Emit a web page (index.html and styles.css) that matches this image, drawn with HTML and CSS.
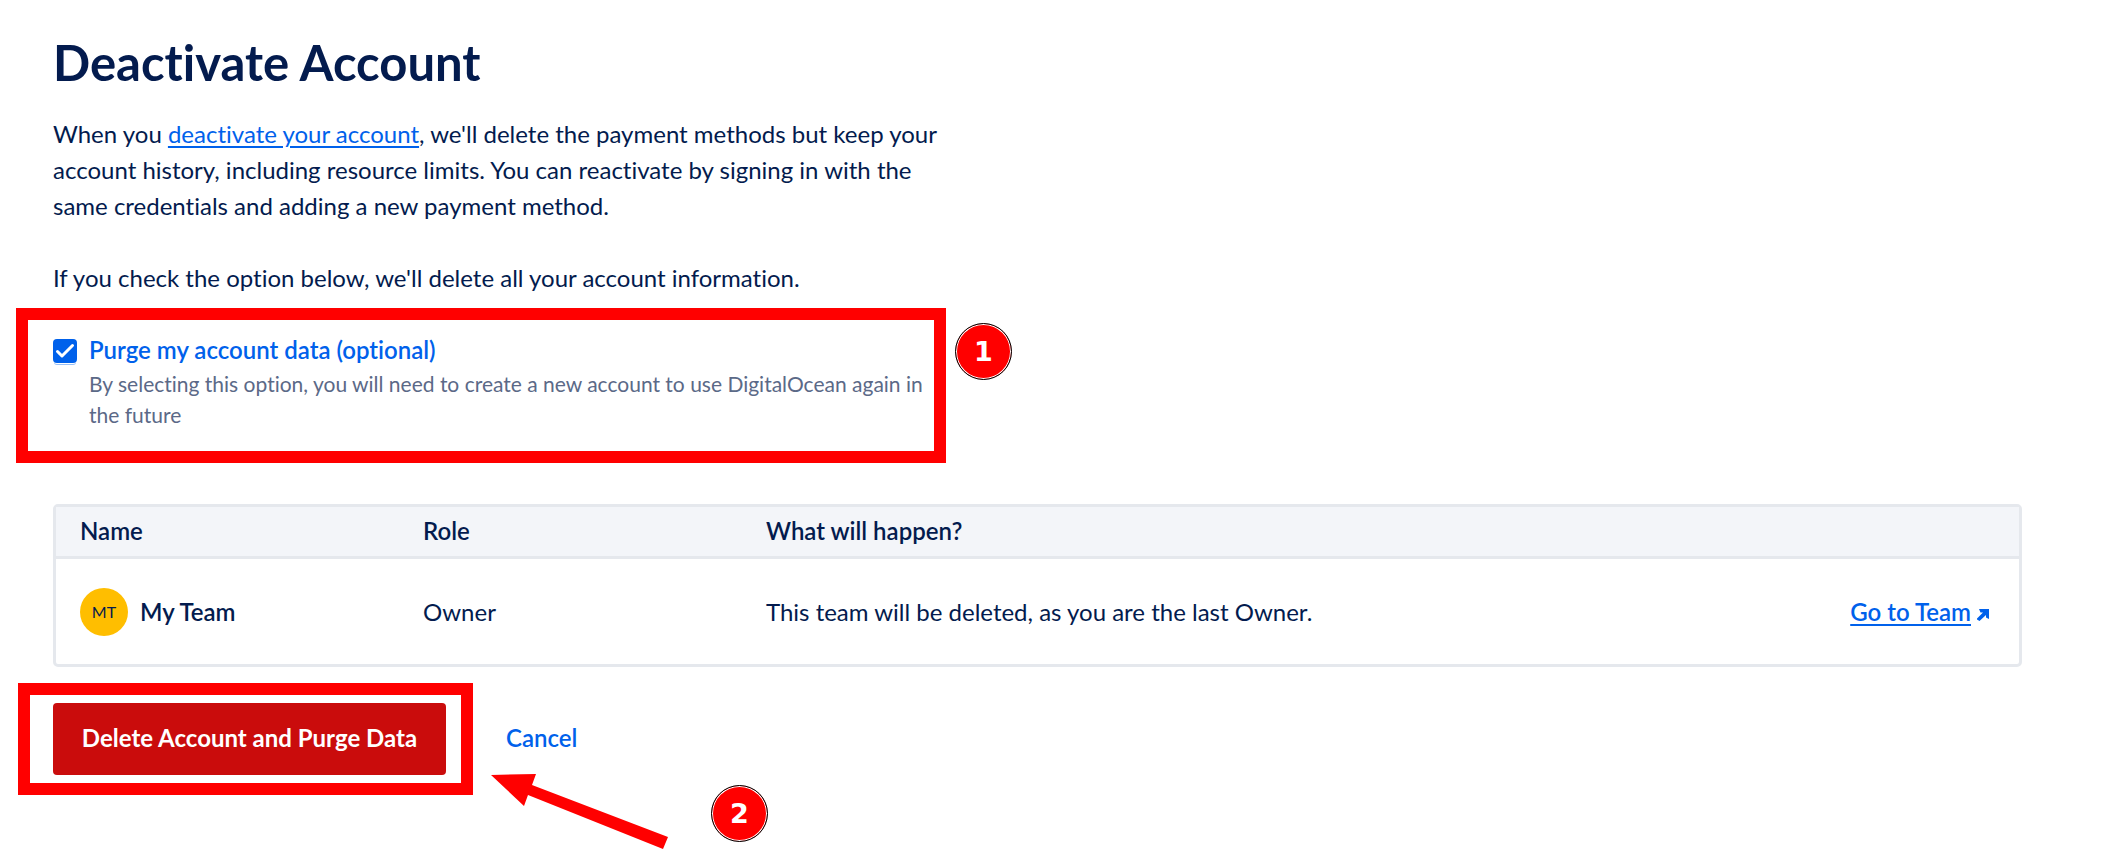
FILE: index.html
```html
<!DOCTYPE html>
<html lang="en">
<head>
<meta charset="utf-8">
<title>Deactivate Account</title>
<link rel="stylesheet" href="styles.css">
</head>
<body>
<main class="page">
  <h1 class="title">Deactivate Account</h1>
  <div class="intro">
    <p>When you <a class="link" href="#deactivate">deactivate your account</a>, we'll delete the payment methods but keep your account history, including resource limits. You can reactivate by signing in with the same credentials and adding a new payment method.</p>
    <p>If you check the option below, we'll delete all your account information.</p>
  </div>

  <section class="purge">
    <input class="purge-box" type="checkbox" id="purge" aria-describedby="purge-note" checked>
    <div class="purge-text">
      <label class="purge-label" for="purge">Purge my account data (optional)</label>
      <p class="purge-note" id="purge-note">By selecting this option, you will need to create a new account to use DigitalOcean again in the future</p>
    </div>
    <div class="frame frame-purge"></div>
    <span class="badge badge-one">1</span>
  </section>

  <table class="teams">
    <thead>
      <tr><th class="col-name">Name</th><th class="col-role">Role</th><th>What will happen?</th><td class="col-link"></td></tr>
    </thead>
    <tbody>
      <tr>
        <td><div class="team"><span class="avatar">MT</span><span class="team-name">My Team</span></div></td>
        <td>Owner</td>
        <td>This team will be deleted, as you are the last Owner.</td>
        <td class="col-link"><a class="go" href="#team"><span class="go-text">Go to Team</span><svg class="go-icon" viewBox="0 0 12 12" aria-hidden="true"><path d="M2 0H12V10L9 8.500V6L2.500 12L0 10.500V9.500L6 3.400H3.500z" fill="#0061eb"/></svg></a></td>
      </tr>
    </tbody>
  </table>

  <div class="actions">
    <div class="delete-wrap">
      <button class="delete" type="button">Delete Account and Purge Data</button>
      <div class="frame frame-delete"></div>
    </div>
    <a class="cancel" href="#cancel">Cancel</a>
    <svg class="arrow" viewBox="0 0 178 76" aria-hidden="true"><path d="M0 1L45 0L41 11L177 63L172 75L37 21L33 32z" fill="#f00"/></svg>
    <span class="badge badge-two">2</span>
  </div>
</main>
</body>
</html>
```
FILE: styles.css
```css
* {
  box-sizing: border-box;
}

body {
  margin: 0;
  background: #fff;
  color: #031b4e;
  font-family: Lato, "Liberation Sans", sans-serif;
  font-size: 24px;
  font-variant-ligatures: none;
  line-height: 36px;
}

h1,
p {
  margin: 0;
}

.page {
  min-height: 100vh;
  padding: 32px 93px 12px 53px;
}

.title {
  font-size: 49px;
  font-weight: 700;
  line-height: 60px;
}

.intro {
  display: grid;
  gap: 36px;
  max-width: 892px;
  margin-top: 24px;
}

.link {
  color: #0061eb;
  text-decoration-thickness: 2px;
  text-underline-offset: 3px;
}

.purge {
  position: relative;
  display: flex;
  gap: 12px;
  max-width: 880px;
  margin-top: 36px;
}

.purge-box {
  appearance: none;
  flex: none;
  width: 24px;
  height: 24px;
  margin: 7px 0 0;
  border-radius: 4px;
  background: #0061eb url("data:image/svg+xml,%3Csvg xmlns='http://www.w3.org/2000/svg' viewBox='0 0 24 24'%3E%3Cpath d='M4.500 12.500L9 17L19.500 6.500' fill='none' stroke='white' stroke-width='3' stroke-linecap='round' stroke-linejoin='round'/%3E%3C/svg%3E");
  box-shadow: 0 2px 0 -1px #fff, 0 3px 0 -1px #99c0f7;
}

.purge-label {
  display: block;
  color: #0061eb;
  font-weight: 600;
}

.purge-note {
  color: #5b6987;
  font-size: 21px;
  line-height: 31px;
}

.frame {
  position: absolute;
  border: 12px solid #f00;
  pointer-events: none;
}

.frame-purge {
  inset: -24px -13px -33px -37px;
}

.frame-delete {
  inset: -20px -27px -20px -35px;
}

.badge {
  position: absolute;
  display: grid;
  place-items: center;
  width: 57px;
  height: 57px;
  border: 1px solid #000;
  border-radius: 50%;
  background: #f00;
  box-shadow: inset 0 0 0 1px #fff;
  color: #fff;
  font-family: "DejaVu Sans", sans-serif;
  font-size: 27px;
  font-weight: 700;
}

.badge-one {
  top: -9px;
  right: -79px;
}

.badge-two {
  top: 82px;
  left: 658px;
}

.teams {
  width: 100%;
  margin-top: 74px;
  border: 3px solid #e5e8ed;
  border-radius: 5px;
  border-spacing: 0;
  table-layout: fixed;
}

.teams th,
.teams td {
  padding: 0 0 0 24px;
  text-align: left;
}

.teams thead th,
.teams thead td {
  height: 52px;
  padding-bottom: 2px;
  border-bottom: 3px solid #e5e8ed;
  background: #f3f5f9;
  font-weight: 600;
}

.teams tbody td {
  height: 105px;
}

.teams .col-name,
.teams .col-role {
  width: 343px;
}

.teams .col-link {
  width: 260px;
  padding: 0 30px 0 0;
  text-align: right;
}

.team {
  display: flex;
  align-items: center;
  gap: 12px;
}

.avatar {
  display: grid;
  place-items: center;
  width: 48px;
  height: 48px;
  border-radius: 50%;
  background: #ffbe00;
  font-size: 16px;
}

.team-name {
  font-weight: 600;
}

.go {
  display: inline-flex;
  align-items: baseline;
  gap: 6px;
  color: #0061eb;
  font-weight: 600;
  text-decoration: none;
}

.go-text {
  text-decoration: underline 2px;
  text-underline-offset: 3px;
}

.go-icon {
  width: 12px;
  height: 12px;
}

.actions {
  position: relative;
  display: flex;
  align-items: center;
  gap: 60px;
  margin-top: 36px;
}

.delete-wrap {
  position: relative;
}

.delete {
  min-width: 393px;
  height: 72px;
  padding: 0 27px 2px;
  border: 0;
  border-radius: 4px;
  background: #ca0c0c;
  color: #fff;
  font: inherit;
  font-weight: 700;
}

.cancel {
  padding-bottom: 2px;
  color: #0061eb;
  font-weight: 600;
  text-decoration: none;
}

.arrow {
  position: absolute;
  top: 71px;
  left: 438px;
  width: 178px;
  height: 76px;
}
```
